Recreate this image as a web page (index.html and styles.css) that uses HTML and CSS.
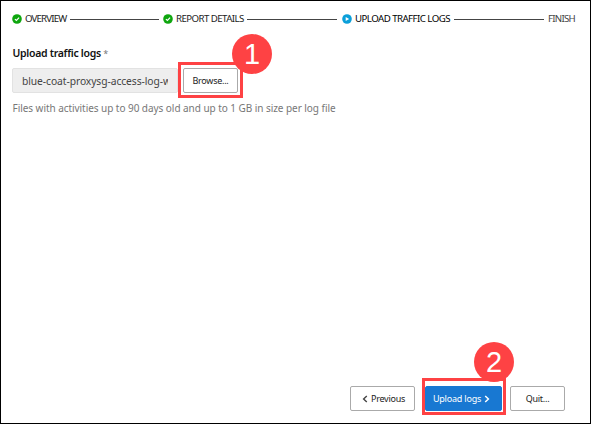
FILE: index.html
```html
<!DOCTYPE html>
<html lang="en">
<head>
<meta charset="utf-8">
<title>Upload traffic logs</title>
<link rel="stylesheet" href="styles.css">
</head>
<body>
<main class="dialog">
  <nav class="steps">
    <svg class="dot" viewBox="0 0 10 10"><circle cx="5" cy="5" r="4.8" fill="#0ea60e"/><path d="M2.9 5.1 4.4 6.5 7.1 3.7" fill="none" stroke="#fff" stroke-width="1.2"/></svg>
    <span class="step overview">OVERVIEW</span>
    <i class="line first"></i>
    <svg class="dot" viewBox="0 0 10 10"><circle cx="5" cy="5" r="4.8" fill="#0ea60e"/><path d="M2.9 5.1 4.4 6.5 7.1 3.7" fill="none" stroke="#fff" stroke-width="1.2"/></svg>
    <span class="step details">REPORT DETAILS</span>
    <i class="line second"></i>
    <svg class="dot" viewBox="0 0 10 10"><circle cx="5" cy="5" r="4.8" fill="#0b9fd9"/><path d="M3.7 2.9 7.2 5 3.7 7.1z" fill="#fff"/></svg>
    <span class="step upload">UPLOAD TRAFFIC LOGS</span>
    <i class="line third"></i>
    <span class="step finish">FINISH</span>
  </nav>
  <section class="form">
    <h1 class="label">Upload traffic logs <span class="required">*</span></h1>
    <div class="picker">
      <div class="file"><span class="filename">blue-coat-proxysg-access-log-w</span></div>
      <div class="target browse-target">
        <button class="btn browse">Browse...</button>
        <span class="badge">1</span>
      </div>
    </div>
    <p class="hint">Files with activities up to 90 days old and up to 1 GB in size per log file</p>
  </section>
  <footer class="actions">
    <button class="btn previous"><svg class="chev" viewBox="0 0 6 8"><path d="M4.8 1 1.6 4l3.2 3" fill="none" stroke="#444" stroke-width="1.4"/></svg><span>Previous</span></button>
    <div class="target upload-target">
      <button class="btn primary"><span>Upload logs</span><svg class="chev" viewBox="0 0 6 8"><path d="M1.2 1 4.4 4 1.2 7" fill="none" stroke="#fff" stroke-width="1.5"/></svg></button>
      <span class="badge">2</span>
    </div>
    <button class="btn quit">Quit...</button>
  </footer>
</main>
</body>
</html>
```
FILE: styles.css
```css
* { box-sizing: border-box; }
body { margin: 0; font-family: "Noto Sans", sans-serif; }
.dialog {
  width: 591px;
  height: 424px;
  border: 1px solid #000;
  background: #fff;
  display: flex;
  flex-direction: column;
  padding: 10px 11px 8px;
}
.steps { display: flex; align-items: center; height: 16px; flex: none; }
.dot { width: 10px; height: 10px; flex: none; }
.step {
  margin-left: 3px;
  font-size: 9.7px;
  line-height: 16px;
  color: #222;
  white-space: nowrap;
  flex: none;
}
.overview { width: 45px; letter-spacing: -0.86px; }
.details { width: 71px; letter-spacing: -0.58px; }
.upload { width: 99px; letter-spacing: -0.55px; color: #000; }
.finish { margin-left: 4px; letter-spacing: -0.75px; color: #444; }
.line { height: 1px; background: #444; flex: none; }
.first { width: 89px; margin-right: 4px; }
.second { width: 90px; margin-right: 5px; }
.third { width: 90px; }
.form { flex: 1; padding-top: 18px; }
.label { margin: 0; height: 16px; font-size: 10.5px; line-height: 16px; font-weight: 600; color: #111; letter-spacing: -0.3px; padding-left: 0.5px; }
.required { font-weight: 400; font-size: 9px; color: #777; }
.picker { display: flex; height: 36px; margin-top: 1px; align-items: center; }
.file {
  width: 166px;
  height: 25px;
  border: 1px solid #e2e2e2;
  border-radius: 2px;
  background: #eee;
  padding: 0 9px;
}
.filename { display: block; white-space: nowrap; overflow: hidden; font-size: 10.3px; letter-spacing: -0.08px; line-height: 24px; height: 23px; color: #444; }
.target { position: relative; border: 3px solid #fe4244; flex: none; display: flex; }
.browse-target { width: 65px; height: 36px; padding: 3px 2px; }
.badge {
  position: absolute;
  width: 40px;
  height: 40px;
  border-radius: 50%;
  background: #fe4244;
  color: #fff;
  font: 29px/40px "Liberation Sans", sans-serif;
  text-align: center;
}
.browse-target .badge { left: 51px; top: -31px; }
.upload-target .badge { left: 49px; top: -39px; }
.btn {
  border: 1px solid #aaa;
  border-radius: 2px;
  background: #fff;
  color: #222;
  font: 9px/14px "Noto Sans", sans-serif;
  letter-spacing: -0.25px;
  height: 25px;
  padding: 0;
  display: flex;
  align-items: center;
  justify-content: center;
  white-space: nowrap;
  flex: none;
}
.browse { width: 55px; height: 25px; }
.hint { margin: 2px 0 0; padding-left: 0.5px; font-size: 10px; letter-spacing: -0.05px; line-height: 16px; color: #777; white-space: nowrap; }
.actions { display: flex; align-items: flex-start; height: 37px; padding-left: 338px; flex: none; }
.previous { width: 65px; margin: 8px 7px 0 0; gap: 3px; padding-left: 2px; }
.upload-target { width: 84px; height: 37px; padding: 5px 0 0 0; margin-right: 4px; }
.primary { width: 77px; border-color: #1878d2; background: #1878d2; color: #fff; gap: 3px; padding-right: 4px; letter-spacing: -0.2px; }
.quit { width: 55px; margin-top: 8px; }
.chev { width: 6px; height: 8px; }
```
